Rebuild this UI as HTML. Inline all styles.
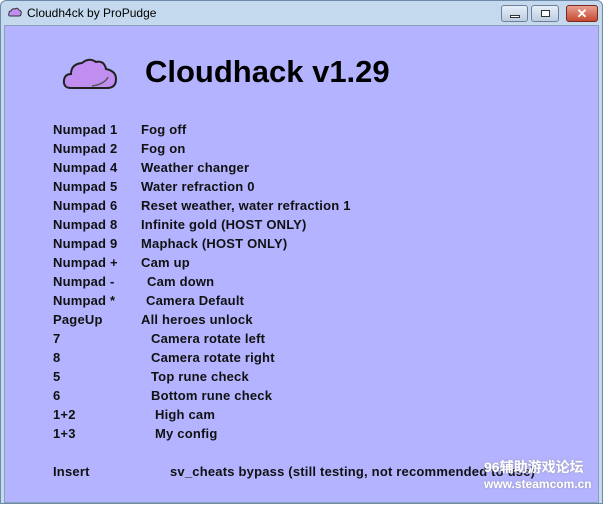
<!DOCTYPE html>
<html><head><meta charset="utf-8"><style>
*{margin:0;padding:0;box-sizing:border-box}
html,body{width:603px;height:506px;overflow:hidden;background:#fff;font-family:"Liberation Sans","Noto Sans CJK SC",sans-serif}
#win{position:absolute;left:0;top:0;width:603px;height:504px;background:#c4d9ee;border:1px solid #6e8aa8;border-radius:6px 6px 0 0}
#title{position:absolute;left:26px;top:5px;font-size:12px;color:#000}
#client{position:absolute;left:3px;top:24px;width:595px;height:478px;background:#b3b3ff;border:1px solid #8aa0b8}
.btn{position:absolute;top:4px;height:17px;border:1px solid #6d7f96;border-radius:3px;background:linear-gradient(#e6eef8,#bccde2)}
.t{position:absolute;font-size:13px;font-weight:bold;color:#111;white-space:nowrap;letter-spacing:0.2px}
#big{position:absolute;left:145px;top:54px;font-size:31px;font-weight:bold;color:#000;letter-spacing:0}
.wm{position:absolute;color:#fff;font-weight:bold;text-shadow:0 0 2px #99a}
</style></head><body>
<div id="win">
<svg style="position:absolute;left:7px;top:6px" width="14" height="10" viewBox="0 0 14 10"><path d="M2 9 Q0 9 1 6 Q1 4 3 4 Q4 1 7 2 Q9 0 11 3 Q14 4 13 7 Q13 9 11 9 Z" fill="#c08ef0" stroke="#333" stroke-width="1"/></svg>
<div id="title">Cloudh4ck by ProPudge</div>
<div class="btn" style="left:500px;width:27px"><div style="position:absolute;left:8px;top:9px;width:10px;height:3px;background:#fff;border:1px solid #333"></div></div>
<div class="btn" style="left:530px;width:28px"><div style="position:absolute;left:9px;top:4px;width:9px;height:7px;border:1px solid #333;background:#fff"></div></div>
<div class="btn" style="left:565px;width:32px;background:linear-gradient(#e8a090,#c44a32);border-color:#7a2a1a;color:#fff;font-weight:bold;font-size:13px;text-align:center;line-height:15px">✕</div>
<div id="client"></div>
</div>
<svg style="position:absolute;left:62px;top:57px" width="56" height="34" viewBox="0 0 56 34"><path d="M9 31 Q1 31 2 23 Q3 17 9 17 Q9 7 20 6 Q27 0 34 5 Q42 3 44 12 Q54 14 54 22 Q54 31 45 31 Z" fill="#c08ef0" stroke="#222" stroke-width="2"/><path d="M30 29 Q43 27 46 20" stroke="#555" stroke-width="1.5" fill="none"/></svg>
<div id="big">Cloudhack v1.29</div>
<div class="t" style="left:53px;top:122px">Numpad 1</div><div class="t" style="left:141px;top:122px">Fog off</div>
<div class="t" style="left:53px;top:141px">Numpad 2</div><div class="t" style="left:141px;top:141px">Fog on</div>
<div class="t" style="left:53px;top:160px">Numpad 4</div><div class="t" style="left:141px;top:160px">Weather changer</div>
<div class="t" style="left:53px;top:179px">Numpad 5</div><div class="t" style="left:141px;top:179px">Water refraction 0</div>
<div class="t" style="left:53px;top:198px">Numpad 6</div><div class="t" style="left:141px;top:198px">Reset weather, water refraction 1</div>
<div class="t" style="left:53px;top:217px">Numpad 8</div><div class="t" style="left:141px;top:217px">Infinite gold (HOST ONLY)</div>
<div class="t" style="left:53px;top:236px">Numpad 9</div><div class="t" style="left:141px;top:236px">Maphack (HOST ONLY)</div>
<div class="t" style="left:53px;top:255px">Numpad +</div><div class="t" style="left:141px;top:255px">Cam up</div>
<div class="t" style="left:53px;top:274px">Numpad -</div><div class="t" style="left:147px;top:274px">Cam down</div>
<div class="t" style="left:53px;top:293px">Numpad *</div><div class="t" style="left:146px;top:293px">Camera Default</div>
<div class="t" style="left:53px;top:312px">PageUp</div><div class="t" style="left:141px;top:312px">All heroes unlock</div>
<div class="t" style="left:53px;top:331px">7</div><div class="t" style="left:151px;top:331px">Camera rotate left</div>
<div class="t" style="left:53px;top:350px">8</div><div class="t" style="left:151px;top:350px">Camera rotate right</div>
<div class="t" style="left:53px;top:369px">5</div><div class="t" style="left:151px;top:369px">Top rune check</div>
<div class="t" style="left:53px;top:388px">6</div><div class="t" style="left:151px;top:388px">Bottom rune check</div>
<div class="t" style="left:53px;top:407px">1+2</div><div class="t" style="left:155px;top:407px">High cam</div>
<div class="t" style="left:53px;top:426px">1+3</div><div class="t" style="left:155px;top:426px">My config</div>
<div class="t" style="left:53px;top:464px">Insert</div><div class="t" style="left:170px;top:464px">sv_cheats bypass (still testing, not recommended to use)</div>
<div class="wm" style="left:484px;top:457px;font-size:14px">96辅助游戏论坛</div>
<div class="wm" style="left:484px;top:477px;font-size:12px">www.steamcom.cn</div>
</body></html>
